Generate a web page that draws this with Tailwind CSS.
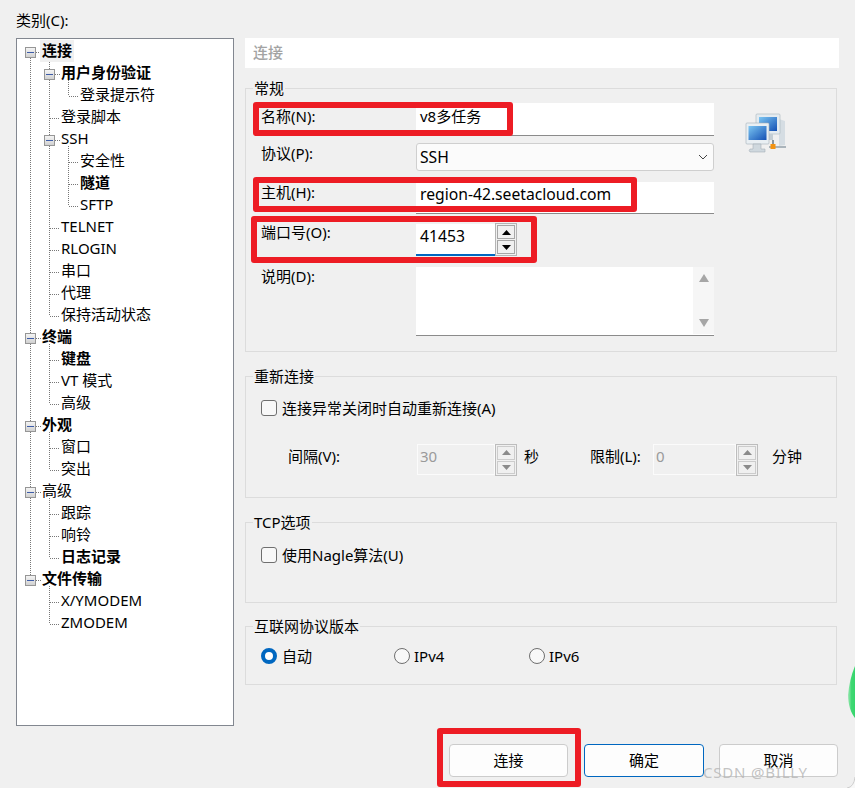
<!DOCTYPE html>
<html lang="zh">
  <head>
    <meta charset="UTF-8" />
    <title>会话属性</title>
    <script src="https://cdn.jsdelivr.net/npm/@tailwindcss/browser@4"></script>
  </head>
  <body class="bg-[#f0f0f0]">
    <div class="relative flex w-[855px] h-[788px] overflow-hidden bg-[#f0f0f0] pt-[13px] pl-[16px] text-[15px] text-black font-['Noto_Sans','Noto_Sans_CJK_SC',sans-serif]">
      <!-- Left: category tree -->
      <div class="w-[229px] shrink-0">
        <div class="h-[25px] leading-[14px]">类别(C):</div>
        <div class="relative w-[218px] h-[688px] bg-white border border-[#828790] pt-[1px]">
          <!-- tree connectors -->
          <svg class="absolute left-0 top-0" width="216" height="686" viewBox="17 39 216 686" fill="none">
            <g stroke="#777" stroke-dasharray="1 1" shape-rendering="crispEdges">
              <path d="M30.5 58V333M30.5 344V421M30.5 432V487M30.5 498V575" />
              <path d="M36 52H41M36 338H41M36 426H41M36 492H41M36 580H41" />
              <path d="M49.5 62V69M49.5 80V135M49.5 146V316M49.5 344V404M49.5 432V470M49.5 498V558M49.5 586V624" />
              <path d="M55 74H60M50 118H60M55 140H60M50 228H60M50 250H60M50 272H60M50 294H60M50 316H60" />
              <path d="M50 360H60M50 382H60M50 404H60M50 448H60M50 470H60M50 514H60M50 536H60M50 558H60M50 602H60M50 624H60" />
              <path d="M68.5 80V96M68.5 146V206M69 96H79M69 162H79M69 184H79M69 206H79" />
            </g>
            <defs>
              <linearGradient id="box" x1="0" y1="0" x2="0" y2="1">
                <stop offset="0" stop-color="#f6f6f6" />
                <stop offset="1" stop-color="#cfcfcf" />
              </linearGradient>
            </defs>
            <g stroke="#969696" fill="url(#box)" shape-rendering="crispEdges">
              <rect x="25.5" y="47.5" width="10" height="10" />
              <rect x="44.5" y="69.5" width="10" height="10" />
              <rect x="44.5" y="135.5" width="10" height="10" />
              <rect x="25.5" y="333.5" width="10" height="10" />
              <rect x="25.5" y="421.5" width="10" height="10" />
              <rect x="25.5" y="487.5" width="10" height="10" />
              <rect x="25.5" y="575.5" width="10" height="10" />
            </g>
            <g stroke="#3d5ca8" shape-rendering="crispEdges">
              <path d="M27 52.5H34M46 74.5H53M46 140.5H53M27 338.5H34M27 426.5H34M27 492.5H34M27 580.5H34" />
            </g>
          </svg>
          <div class="relative leading-[21px]">
            <div class="h-[22px] pl-[23px]"><span class="inline-block h-[22px] px-[2px] bg-[#f0f0f0] font-bold">连接</span></div>
            <div class="h-[22px] pl-[44px] font-bold">用户身份验证</div>
            <div class="h-[22px] pl-[63px]">登录提示符</div>
            <div class="h-[22px] pl-[44px]">登录脚本</div>
            <div class="h-[22px] pl-[44px]">SSH</div>
            <div class="h-[22px] pl-[63px]">安全性</div>
            <div class="h-[22px] pl-[63px] font-bold">隧道</div>
            <div class="h-[22px] pl-[63px]">SFTP</div>
            <div class="h-[22px] pl-[44px]">TELNET</div>
            <div class="h-[22px] pl-[44px]">RLOGIN</div>
            <div class="h-[22px] pl-[44px]">串口</div>
            <div class="h-[22px] pl-[44px]">代理</div>
            <div class="h-[22px] pl-[44px]">保持活动状态</div>
            <div class="h-[22px] pl-[25px] font-bold">终端</div>
            <div class="h-[22px] pl-[44px] font-bold">键盘</div>
            <div class="h-[22px] pl-[44px]">VT 模式</div>
            <div class="h-[22px] pl-[44px]">高级</div>
            <div class="h-[22px] pl-[25px] font-bold">外观</div>
            <div class="h-[22px] pl-[44px]">窗口</div>
            <div class="h-[22px] pl-[44px]">突出</div>
            <div class="h-[22px] pl-[25px]">高级</div>
            <div class="h-[22px] pl-[44px]">跟踪</div>
            <div class="h-[22px] pl-[44px]">响铃</div>
            <div class="h-[22px] pl-[44px] font-bold">日志记录</div>
            <div class="h-[22px] pl-[25px] font-bold">文件传输</div>
            <div class="h-[22px] pl-[44px]">X/YMODEM</div>
            <div class="h-[22px] pl-[44px]">ZMODEM</div>
          </div>
        </div>
      </div>

      <!-- Right: settings -->
      <div class="w-[594px] shrink-0 mt-[25px]">
        <div class="h-[30px] bg-white pl-[8px] leading-[29px] font-medium text-[#a3a3a3]">连接</div>

        <!-- 常规 -->
        <div class="relative mt-[20px] w-[592px] h-[264px] border border-[#dcdcdc] pt-[14px] flex">
          <div class="absolute left-[7px] top-[-11px] h-[20px] px-[1px] leading-[20px] bg-[#f0f0f0]">常规</div>
          <div class="w-[468px] shrink-0">
            <div class="flex h-[33px]">
              <div class="w-[170px] pl-[15px] leading-[27px]">名称(N):</div>
              <div class="w-[298px] h-[33px] bg-white border-b border-[#8b8b8b] pl-[4px] leading-[27px]">v8多任务</div>
            </div>
            <div class="flex h-[28px] mt-[7px]">
              <div class="w-[170px] pl-[15px] leading-[20px]">协议(P):</div>
              <div class="relative w-[298px] h-[28px] bg-[#fbfbfb] border border-[#cfcfcf] rounded-[3px] pl-[3px] leading-[27px] text-[15.7px]">
                SSH
                <svg class="absolute right-[5px] top-[10px]" width="10" height="7" viewBox="0 0 10 7" fill="none" stroke="#444"><path d="M1 1l4 4 4-4" /></svg>
              </div>
            </div>
            <div class="flex h-[32px] mt-[11px]">
              <div class="w-[170px] pl-[15px] leading-[20px]">主机(H):</div>
              <div class="w-[298px] h-[32px] bg-white border-b border-[#8b8b8b] pl-[4px] leading-[24px] text-[15.7px]">region-42.seetacloud.com</div>
            </div>
            <div class="flex h-[32px] mt-[10px]">
              <div class="w-[170px] pl-[15px] leading-[16px]">端口号(O):</div>
              <div class="w-[79px] h-[32px] bg-white border-b-2 border-[#0067c0] pl-[4px] leading-[25px] text-[15.7px]">41453</div>
              <div class="w-[22px] h-[33px] -mt-[1px] border border-[#b4b4b4] p-[1px] flex flex-col gap-[1px]">
                <div class="flex-1 bg-[#f0f0f0] border border-[#a6a6a6] flex items-center justify-center">
                  <svg width="9" height="5" viewBox="0 0 9 5" fill="#000"><path d="M4.5 0L9 5H0z" /></svg>
                </div>
                <div class="flex-1 bg-[#f0f0f0] border border-[#a6a6a6] flex items-center justify-center">
                  <svg width="9" height="5" viewBox="0 0 9 5" fill="#000"><path d="M0 0H9L4.5 5z" /></svg>
                </div>
              </div>
            </div>
            <div class="flex h-[69px] mt-[11px]">
              <div class="w-[170px] pl-[15px] leading-[18px]">说明(D):</div>
              <div class="w-[298px] h-[69px] bg-white border-b border-[#8b8b8b] flex justify-end">
                <div class="w-[21px] h-[67px] bg-[#f6f6f6] flex flex-col justify-between items-center py-[7px]">
                  <svg width="10" height="8" viewBox="0 0 10 8" fill="#a6a6a6"><path d="M5 0L10 8H0z" /></svg>
                  <svg width="10" height="8" viewBox="0 0 10 8" fill="#a6a6a6"><path d="M0 0H10L5 8z" /></svg>
                </div>
              </div>
            </div>
          </div>
          <!-- network icon -->
          <svg class="ml-[31px] mt-[10px]" width="41" height="41" viewBox="0 0 41 41">
            <defs>
              <linearGradient id="scr" x1="0" y1="0" x2="1" y2="1">
                <stop offset="0" stop-color="#7cc6f2" />
                <stop offset="1" stop-color="#1450b4" />
              </linearGradient>
            </defs>
            <path d="M34 6l6 2v24l-6 1z" fill="#d5dde3" />
            <rect x="11" y="1" width="24" height="20" rx="1" fill="#e4ebf0" stroke="#a9b5bd" stroke-width=".6" />
            <rect x="14" y="4" width="18" height="14" fill="url(#scr)" />
            <path d="M21 21h7v6h-7z" fill="#c4ced4" />
            <path d="M24 33h17v2H24z" fill="#aab4bb" />
            <rect x="1" y="10" width="23" height="21" rx="1" fill="#e9eff3" stroke="#a4b0b8" stroke-width=".6" />
            <rect x="3.500" y="13" width="18" height="14" fill="url(#scr)" />
            <path d="M8 31h8v5h4v3H5a2 2 0 0 1 0-3h3z" fill="#cfd8de" stroke="#9ba7af" stroke-width=".5" />
            <path d="M27 27h2v4h-2z" fill="#8b969d" />
            <rect x="25.500" y="31" width="5" height="5" fill="#f39312" />
          </svg>
        </div>

        <!-- 重新连接 -->
        <div class="relative mt-[24px] w-[592px] h-[122px] border border-[#dcdcdc] pt-[20px]">
          <div class="absolute left-[7px] top-[-11px] h-[20px] px-[1px] leading-[20px] bg-[#f0f0f0]">重新连接</div>
          <div class="flex h-[22px] items-center pl-[15px] gap-[5px]">
            <div class="w-[16px] h-[16px] rounded-[3px] bg-[#f8f8f8] border border-[#6f6f6f]"></div>
            <div>连接异常关闭时自动重新连接(A)</div>
          </div>
          <div class="flex h-[32px] mt-[25px] items-start pl-[42px] leading-[24px]">
            <div class="w-[129px]">间隔(V):</div>
            <div class="w-[78px] h-[31px] border border-[#fbfbfb] pl-[2px] leading-[22px] text-[#9a9a9a]">30</div>
            <div class="w-[22px] h-[32px] border border-[#bdbdbd] p-[1px] flex flex-col gap-[1px]">
              <div class="flex-1 bg-[#f0f0f0] border border-[#cccccc] flex items-center justify-center">
                <svg width="9" height="5" viewBox="0 0 9 5" fill="#8a8a8a"><path d="M4.5 0L9 5H0z" /></svg>
              </div>
              <div class="flex-1 bg-[#f0f0f0] border border-[#cccccc] flex items-center justify-center">
                <svg width="9" height="5" viewBox="0 0 9 5" fill="#8a8a8a"><path d="M0 0H9L4.5 5z" /></svg>
              </div>
            </div>
            <div class="w-[73px] pl-[7px]">秒</div>
            <div class="w-[63px]">限制(L):</div>
            <div class="w-[83px] h-[31px] border border-[#fbfbfb] pl-[2px] leading-[22px] text-[#9a9a9a]">0</div>
            <div class="w-[22px] h-[32px] border border-[#bdbdbd] p-[1px] flex flex-col gap-[1px]">
              <div class="flex-1 bg-[#f0f0f0] border border-[#cccccc] flex items-center justify-center">
                <svg width="9" height="5" viewBox="0 0 9 5" fill="#8a8a8a"><path d="M4.5 0L9 5H0z" /></svg>
              </div>
              <div class="flex-1 bg-[#f0f0f0] border border-[#cccccc] flex items-center justify-center">
                <svg width="9" height="5" viewBox="0 0 9 5" fill="#8a8a8a"><path d="M0 0H9L4.5 5z" /></svg>
              </div>
            </div>
            <div class="ml-[14px]">分钟</div>
          </div>
        </div>

        <!-- TCP选项 -->
        <div class="relative mt-[24px] w-[592px] h-[81px] border border-[#dcdcdc] pt-[21px]">
          <div class="absolute left-[7px] top-[-11px] h-[20px] px-[1px] leading-[20px] bg-[#f0f0f0]">TCP选项</div>
          <div class="flex h-[22px] items-center pl-[15px] gap-[5px]">
            <div class="w-[16px] h-[16px] rounded-[3px] bg-[#f8f8f8] border border-[#6f6f6f]"></div>
            <div>使用Nagle算法(U)</div>
          </div>
        </div>

        <!-- 互联网协议版本 -->
        <div class="relative mt-[23px] w-[592px] h-[59px] border border-[#dcdcdc] pt-[18px]">
          <div class="absolute left-[7px] top-[-11px] h-[20px] px-[1px] leading-[20px] bg-[#f0f0f0]">互联网协议版本</div>
          <div class="flex h-[22px] items-center pl-[15px]">
            <div class="w-[133px] flex items-center gap-[5px]">
              <div class="w-[16px] h-[16px] rounded-full border-[4px] border-[#0067c0] bg-white"></div>
              <div class="leading-[20px]">自动</div>
            </div>
            <div class="w-[135px] flex items-center gap-[4px]">
              <div class="w-[16px] h-[16px] rounded-full border border-[#6f6f6f] bg-[#f8f8f8]"></div>
              <div class="leading-[20px]">IPv4</div>
            </div>
            <div class="flex items-center gap-[4px]">
              <div class="w-[16px] h-[16px] rounded-full border border-[#6f6f6f] bg-[#f8f8f8]"></div>
              <div class="leading-[20px]">IPv6</div>
            </div>
          </div>
        </div>

        <!-- Buttons -->
        <div class="flex mt-[59px] pl-[204px] leading-[31px] text-center">
          <div class="w-[119px] h-[33px] bg-[#fdfdfd] border border-[#cccccc] rounded-[4px]">连接</div>
          <div class="w-[120px] h-[33px] ml-[16px] bg-[#fdfdfd] border border-[#0067c0] rounded-[4px]">确定</div>
          <div class="w-[119px] h-[33px] ml-[15px] bg-[#fdfdfd] border border-[#cccccc] rounded-[4px]">取消</div>
        </div>
      </div>

      <!-- Annotation boxes drawn over the window -->
      <div class="absolute left-[253px] top-[102px] w-[260px] h-[34px] border-[6px] border-[#ed1c24] rounded-[3px]"></div>
      <div class="absolute left-[253px] top-[177px] w-[384px] h-[35px] border-[6px] border-[#ed1c24] rounded-[3px]"></div>
      <div class="absolute left-[251px] top-[216px] w-[286px] h-[47px] border-[6px] border-[#ed1c24] rounded-[3px]"></div>
      <div class="absolute left-[437px] top-[728px] w-[144px] h-[59px] border-[6px] border-[#ed1c24] rounded-[3px]"></div>

      <!-- Desktop showing at the window edge, watermark -->
      <svg class="absolute left-[845px] top-[660px]" width="10" height="128" viewBox="845 660 10 128">
        <defs>
          <linearGradient id="leaf" x1="0" y1="0" x2="1" y2="0">
            <stop offset="0" stop-color="#9fe8b6" />
            <stop offset=".5" stop-color="#3fd873" />
            <stop offset="1" stop-color="#36d56c" />
          </linearGradient>
        </defs>
        <path d="M855 666C851 675 849 685 848 695C848 705 851 713 855 718z" fill="url(#leaf)" />
        <path d="M855 777Q854 787 847 788H855z" fill="#f8f8f8" />
        <path d="M855 777Q854 787 847 788" fill="none" stroke="#cdcdcd" />
      </svg>
      <div class="absolute left-[703px] top-[762px] text-[15px] leading-[20px] tracking-[0.8px] text-[#b4b4b4]/80">CSDN @BILLY</div>
    </div>
  </body>
</html>
